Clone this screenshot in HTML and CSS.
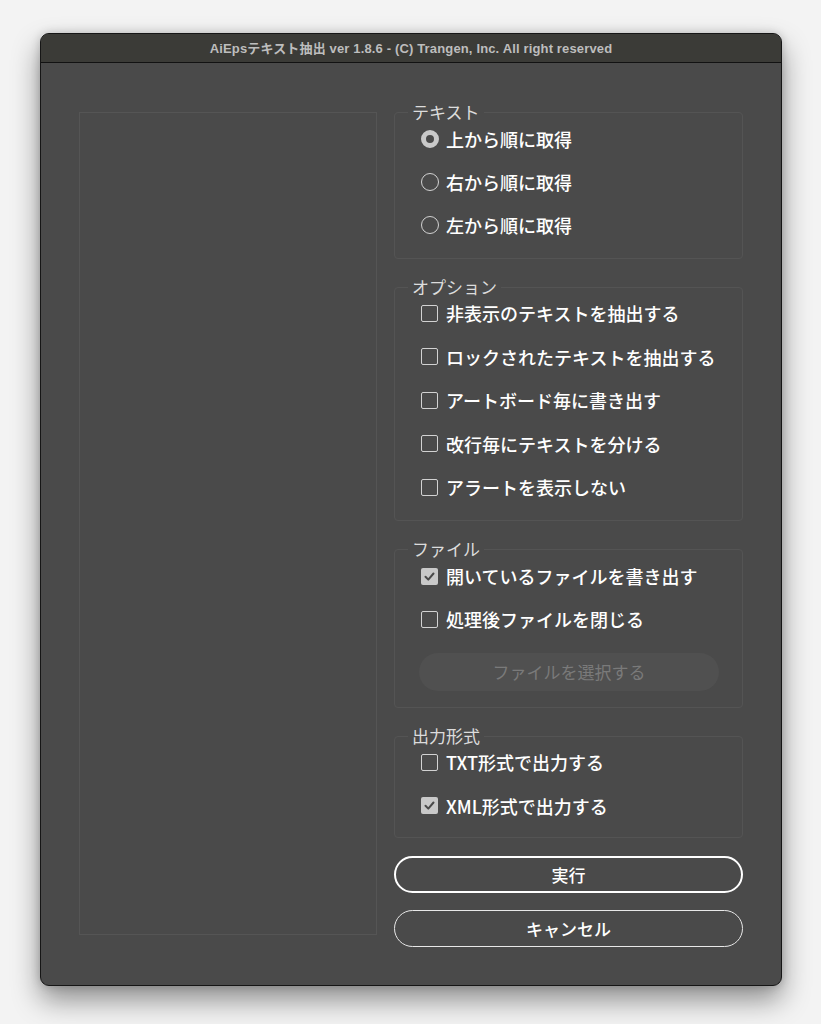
FILE: index.html
```html
<!DOCTYPE html>
<html lang="ja">
<head>
<meta charset="utf-8">
<title>AiEpsテキスト抽出</title>
<link rel="stylesheet" href="styles.css">
</head>
<body>
<div class="window">
  <div class="titlebar">AiEpsテキスト抽出 ver 1.8.6 - (C) Trangen, Inc. All right reserved</div>
  <div class="content">
    <div class="preview"></div>
    <div class="side">
      <fieldset class="group g1">
        <legend>テキスト</legend>
        <div class="row"><span class="ind"><span class="radio on"></span></span><span>上から順に取得</span></div>
        <div class="row"><span class="ind"><span class="radio"></span></span><span>右から順に取得</span></div>
        <div class="row"><span class="ind"><span class="radio"></span></span><span>左から順に取得</span></div>
      </fieldset>
      <fieldset class="group g2">
        <legend>オプション</legend>
        <div class="row"><span class="ind"><span class="check"></span></span><span>非表示のテキストを抽出する</span></div>
        <div class="row"><span class="ind"><span class="check"></span></span><span>ロックされたテキストを抽出する</span></div>
        <div class="row"><span class="ind"><span class="check"></span></span><span>アートボード毎に書き出す</span></div>
        <div class="row"><span class="ind"><span class="check"></span></span><span>改行毎にテキストを分ける</span></div>
        <div class="row"><span class="ind"><span class="check"></span></span><span>アラートを表示しない</span></div>
      </fieldset>
      <fieldset class="group g3">
        <legend>ファイル</legend>
        <div class="row"><span class="ind"><span class="check on"><svg viewBox="0 0 17 17" width="17" height="17"><path d="M4.5 8.8 L7.3 11.6 L12.5 5.5" fill="none" stroke="#4a4a4a" stroke-width="2" stroke-linecap="round" stroke-linejoin="round"/></svg></span></span><span>開いているファイルを書き出す</span></div>
        <div class="row"><span class="ind"><span class="check"></span></span><span>処理後ファイルを閉じる</span></div>
        <div class="filebtn">ファイルを選択する</div>
      </fieldset>
      <fieldset class="group g4">
        <legend>出力形式</legend>
        <div class="row"><span class="ind"><span class="check"></span></span><span>TXT形式で出力する</span></div>
        <div class="row"><span class="ind"><span class="check on"><svg viewBox="0 0 17 17" width="17" height="17"><path d="M4.5 8.8 L7.3 11.6 L12.5 5.5" fill="none" stroke="#4a4a4a" stroke-width="2" stroke-linecap="round" stroke-linejoin="round"/></svg></span></span><span>XML形式で出力する</span></div>
      </fieldset>
      <div class="btn primary">実行</div>
      <div class="btn">キャンセル</div>
    </div>
  </div>
</div>
</body>
</html>
```
FILE: styles.css
```css
html, body {
  margin: 0;
  padding: 0;
  background: #f3f3f3;
  font-family: "Noto Sans CJK JP", "Noto Sans", sans-serif;
}
body {
  padding: 33px 0 0 40px;
  height: 1024px;
  box-sizing: border-box;
  overflow: hidden;
}
.window {
  width: 742px;
  height: 953px;
  box-sizing: border-box;
  border: 1px solid #161616;
  border-radius: 9px;
  background: #4a4a4a;
  overflow: hidden;
  box-shadow: 0 14px 28px rgba(0,0,0,0.42), 0 0 10px rgba(0,0,0,0.18);
  display: flex;
  flex-direction: column;
}
.titlebar {
  height: 28px;
  background: #3b3b37;
  border-bottom: 1px solid #121212;
  color: #bdbdbd;
  font-family: "Liberation Sans", "Noto Sans CJK JP", sans-serif;
  font-weight: 700;
  font-size: 13px;
  letter-spacing: 0.15px;
  line-height: 29px;
  text-align: center;
  flex: none;
}
.content {
  flex: 1;
  display: flex;
  padding: 49px 38px 0 38px;
  gap: 17px;
}
.preview {
  width: 298px;
  height: 823px;
  box-sizing: border-box;
  border: 1px solid #555555;
  flex: none;
}
.side {
  width: 349px;
  display: flex;
  flex-direction: column;
  margin-top: -10px;
}
.group {
  margin: 0 0 18px 0;
  padding: 4px 0 18px 26px;
  border: 1px solid #545454;
  border-radius: 4px;
  display: flex;
  flex-direction: column;
  gap: 17.5px;
  box-sizing: border-box;
}
.group legend {
  margin-left: -13px;
  padding: 0 4px;
  font-size: 17px;
  line-height: 20px;
  color: #dcdcdc;
  font-weight: 400;
}
.g1 { height: 157px; padding-top: 4px; gap: 17px; }
.g2 { height: 244px; padding-top: 3px; }
.g3 { height: 169px; padding-top: 4px; gap: 17px; }
.g4 { height: 112px; padding-top: 3px; margin-bottom: 0; }
.row {
  height: 26px;
  display: flex;
  align-items: center;
  gap: 7px;
  color: #ffffff;
  font-size: 18px;
  font-weight: 500;
  line-height: 26px;
  white-space: nowrap;
}
.ind {
  width: 18px;
  height: 18px;
  display: flex;
  align-items: center;
  flex: none;
}
.radio {
  width: 18px;
  height: 18px;
  box-sizing: border-box;
  border: 1.5px solid #d2d2d2;
  border-radius: 50%;
}
.radio.on {
  border: 5px solid #c9c9c9;
  background: #4a4a4a;
}
.check {
  width: 17px;
  height: 17px;
  box-sizing: border-box;
  border: 1.5px solid #d2d2d2;
  border-radius: 2px;
  display: block;
}
.check.on {
  border: none;
  background: #c9c9c9;
}
.check svg { display: block; }
.filebtn {
  margin: 4px 0 0 -2px;
  width: 300px;
  height: 38px;
  border-radius: 19px;
  background: #505050;
  color: #7a7a7a;
  font-size: 17px;
  line-height: 38px;
  text-align: center;
}
.btn {
  height: 37px;
  box-sizing: border-box;
  border: 1px solid #e8e8e8;
  border-radius: 19px;
  color: #ffffff;
  font-size: 17px;
  font-weight: 500;
  display: flex;
  align-items: center;
  justify-content: center;
  margin-bottom: 17px;
}
.btn.primary {
  border: 2.5px solid #ffffff;
  margin-top: 18px;
}
```
